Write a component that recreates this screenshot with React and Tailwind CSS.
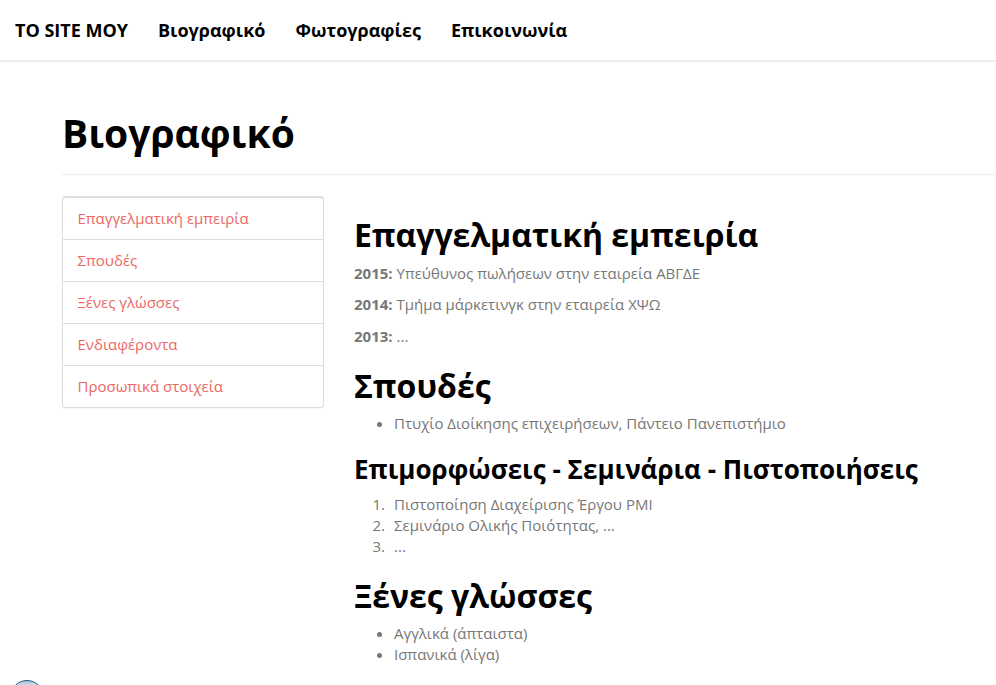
const links = ['Επαγγελματική εμπειρία', 'Σπουδές', 'Ξένες γλώσσες', 'Ενδιαφέροντα', 'Προσωπικά στοιχεία'];

const jobs = [
  ['2015:', 'Υπεύθυνος πωλήσεων στην εταιρεία ΑΒΓΔΕ'],
  ['2014:', 'Τμήμα μάρκετινγκ στην εταιρεία ΧΨΩ'],
  ['2013:', '...'],
];

const seminars = ['Πιστοποίηση Διαχείρισης Έργου PMI', 'Σεμινάριο Ολικής Ποιότητας, ...', '...'];

export default function App() {
  return (
    <div className="relative h-[685px] w-[996px] overflow-hidden bg-white font-['Open_Sans',sans-serif] text-[15px] leading-[21px] text-[#777]">
      <nav className="flex h-[62px] items-center gap-[30px] border-b-2 border-[#eee] pl-[15px] text-[18px] font-bold leading-[20px] text-black">
        <a href="#top">ΤΟ SITE ΜΟΥ</a>
        <a href="#bio">Βιογραφικό</a>
        <a href="#photos">Φωτογραφίες</a>
        <a href="#contact">Επικοινωνία</a>
      </nav>
      <main className="ml-[62px] pt-[49px]">
        <h1 className="h-16 border-b border-[#eee] text-[39px] font-bold leading-[43px] text-black">Βιογραφικό</h1>
        <div className="flex items-start gap-[30px] pt-[21px]">
          <ul className="w-[262px] rounded border border-t-2 border-[#ddd] shadow-[0_1px_2px_rgba(0,0,0,0.05)]">
            {links.map((t) => (
              <li key={t} className="h-[42px] border-b border-[#ddd] px-[14.5px] py-[10px] text-[#eb6864] last:h-[41px] last:border-b-0">{t}</li>
            ))}
          </ul>
          <div className="pt-[21px]">
            <h2 className="text-[32px] font-bold leading-[35px] text-black">Επαγγελματική εμπειρία</h2>
            <div className="mt-[11px]">
              {jobs.map(([y, t], i) => (
                <p key={y} className={i === 0 ? 'mb-[10px]' : i === 1 ? 'mb-[11px]' : ''}><b>{y}</b> {t}</p>
              ))}
            </div>
            <h2 className="mt-[21px] text-[32px] font-bold leading-[35px] text-black">Σπουδές</h2>
            <ul className="mt-[10px] list-disc pl-10">
              <li>Πτυχίο Διοίκησης επιχειρήσεων, Πάντειο Πανεπιστήμιο</li>
            </ul>
            <h3 className="mt-[21px] text-[26px] font-bold leading-[29px] text-black">Επιμορφώσεις - Σεμινάρια - Πιστοποιήσεις</h3>
            <ol className="mt-[10px]">
              {seminars.map((t, i) => (
                <li key={t} className="flex">
                  <span className="mr-[9px] w-[31px] text-right">{i + 1}.</span>
                  {t}
                </li>
              ))}
            </ol>
            <h2 className="mt-[21px] text-[32px] font-bold leading-[35px] text-black">Ξένες γλώσσες</h2>
            <ul className="mt-[10px] list-disc pl-10">
              <li>Αγγλικά (άπταιστα)</li>
              <li>Ισπανικά (λίγα)</li>
            </ul>
          </div>
        </div>
      </main>
      <svg className="absolute left-[10px] top-[680px]" width="34" height="5" viewBox="0 0 34 5">
        <defs>
          <linearGradient id="orb" gradientUnits="userSpaceOnUse" x1="0" y1="0" x2="0" y2="6">
            <stop offset="0" stopColor="#9dbcd4" />
            <stop offset="1" stopColor="#d5e1ea" />
          </linearGradient>
        </defs>
        <circle cx="17" cy="17" r="16.5" fill="url(#orb)" stroke="#2b5f88" />
      </svg>
    </div>
  );
}
